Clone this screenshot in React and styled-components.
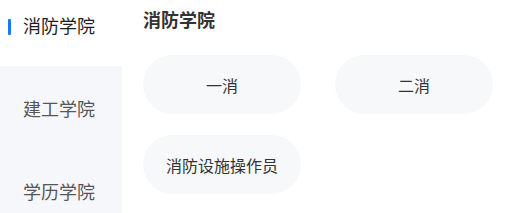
import React, { useState } from 'react';
import styled, { createGlobalStyle } from 'styled-components';

const GlobalStyle = createGlobalStyle`
  html, body {
    margin: 0;
    padding: 0;
    background: #ffffff;
    overflow: hidden;
  }
  body {
    font-family: "Noto Sans CJK SC", "Noto Sans", sans-serif;
  }
`;

const Page = styled.div`
  display: flex;
  width: 508px;
  height: 213px;
  overflow: hidden;
`;

const Sidebar = styled.div`
  width: 122px;
  flex: 0 0 122px;
  background: #f6f7fb;
  overflow: hidden;
`;

const NavList = styled.div`
  display: flex;
  flex-direction: column;
  margin-top: -17px;
`;

const NavItem = styled.div`
  position: relative;
  height: 83px;
  display: flex;
  align-items: center;
  padding-left: 23px;
  font-size: 18px;
  color: ${(p) => (p.$active ? '#1f1f1f' : '#555555')};
  background: ${(p) => (p.$active ? '#ffffff' : 'transparent')};
  cursor: pointer;

  &::before {
    content: '';
    display: ${(p) => (p.$active ? 'block' : 'none')};
    position: absolute;
    left: 8px;
    top: 50%;
    width: 3px;
    height: 16px;
    margin-top: -6px;
    background: #1677ff;
    border-radius: 1px;
  }
`;

const Main = styled.div`
  flex: 1;
  padding: 6px 0 0 21px;
`;

const Title = styled.h2`
  margin: 0;
  font-size: 18px;
  font-weight: 700;
  color: #333333;
  line-height: 26px;
`;

const Grid = styled.div`
  display: grid;
  grid-template-columns: 158px 158px;
  column-gap: 34px;
  row-gap: 21px;
  margin-top: 23px;
`;

const Chip = styled.div`
  height: 59px;
  border-radius: 30px;
  background: #f7f8fa;
  display: flex;
  align-items: center;
  justify-content: center;
  font-size: 16px;
  color: #333333;
  cursor: pointer;
`;

const schools = ['消防学院', '建工学院', '学历学院'];
const courses = ['一消', '二消', '消防设施操作员'];

export default function App() {
  const [active, setActive] = useState(0);
  return (
    <Page>
      <GlobalStyle />
      <Sidebar>
        <NavList>
          {schools.map((s, i) => (
            <NavItem key={s} $active={i === active} onClick={() => setActive(i)}>
              {s}
            </NavItem>
          ))}
        </NavList>
      </Sidebar>
      <Main>
        <Title>{schools[active]}</Title>
        <Grid>
          {courses.map((c) => (
            <Chip key={c}>{c}</Chip>
          ))}
        </Grid>
      </Main>
    </Page>
  );
}
